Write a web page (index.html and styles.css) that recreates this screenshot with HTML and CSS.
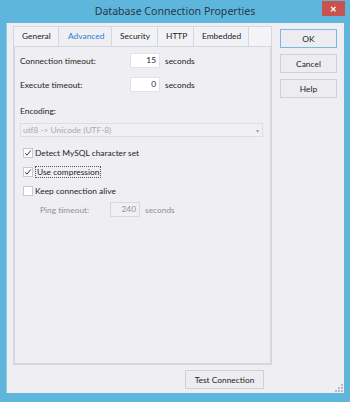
FILE: index.html
```html
<!DOCTYPE html>
<html lang="en">
<head>
  <meta charset="UTF-8" />
  <title>Database Connection Properties</title>
  <link rel="stylesheet" href="styles.css">
</head>
<body>
  <div class="window">
    <div class="titlebar">
      <span class="title">Database Connection Properties</span>
      <div class="close">&#x2715;</div>
    </div>

    <div class="client">
      <div class="main">
        <div class="tabs">
          <div class="tab">General</div>
          <div class="tab active">Advanced</div>
          <div class="tab">Security</div>
          <div class="tab">HTTP</div>
          <div class="tab">Embedded</div>
          <div class="tab filler"></div>
        </div>

        <div class="panel">
          <div class="row first">
            <span class="label">Connection timeout:</span>
            <span class="num">15</span>
            <span class="unit">seconds</span>
          </div>
          <div class="row">
            <span class="label">Execute timeout:</span>
            <span class="num">0</span>
            <span class="unit">seconds</span>
          </div>

          <div class="enc-label">Encoding:</div>
          <div class="combo">
            <span>utf8 -&gt; Unicode (UTF-8)</span>
            <span class="arrow">&#9662;</span>
          </div>

          <div class="check first-check">
            <span class="box checked">
              <svg width="8" height="8" viewBox="0 0 8 8"><path d="M1.2 4.4 L3 6.2 L6.8 1.4" fill="none" stroke="#333" stroke-width="1"/></svg>
            </span>
            <span>Detect MySQL character set</span>
          </div>
          <div class="check">
            <span class="box checked">
              <svg width="8" height="8" viewBox="0 0 8 8"><path d="M1.2 4.4 L3 6.2 L6.8 1.4" fill="none" stroke="#333" stroke-width="1"/></svg>
            </span>
            <span class="focus">Use compression</span>
          </div>
          <div class="check">
            <span class="box"></span>
            <span>Keep connection alive</span>
          </div>

          <div class="row ping">
            <span class="label">Ping timeout:</span>
            <span class="num disabled">240</span>
            <span class="unit">seconds</span>
          </div>
        </div>

        <div class="footer">
          <button class="btn test">Test Connection</button>
        </div>
      </div>

      <div class="side">
        <button class="btn default">OK</button>
        <button class="btn">Cancel</button>
        <button class="btn">Help</button>
      </div>

      <svg class="grip" width="8" height="8" viewBox="0 0 8 8">
        <rect x="6" y="0" width="2" height="2" fill="#b8b8c0"/>
        <rect x="3" y="3" width="2" height="2" fill="#b8b8c0"/>
        <rect x="6" y="3" width="2" height="2" fill="#b8b8c0"/>
        <rect x="0" y="6" width="2" height="2" fill="#b8b8c0"/>
        <rect x="3" y="6" width="2" height="2" fill="#b8b8c0"/>
        <rect x="6" y="6" width="2" height="2" fill="#b8b8c0"/>
      </svg>
    </div>
  </div>
</body>
</html>
```

FILE: styles.css
```css
body {
  margin: 0;
  font-family: Lato, "Noto Sans", sans-serif;
  font-size: 8.4px;
  color: #1e1e1e;
}

.window {
  width: 350px;
  height: 402px;
  box-sizing: border-box;
  background: #5fb6dc;
  padding: 0 6px 9px 6px;
  display: flex;
  flex-direction: column;
}

.titlebar {
  height: 23px;
  position: relative;
  display: flex;
  justify-content: center;
  align-items: center;
}

.title {
  font-family: "Noto Sans", sans-serif;
  font-size: 10.6px;
  color: #24384a;
  margin-top: -2px;
}

.close {
  position: absolute;
  right: -1px;
  top: 1px;
  width: 23px;
  height: 15px;
  background: #c9524f;
  color: #fff;
  font-size: 8px;
  font-weight: bold;
  display: flex;
  align-items: center;
  justify-content: center;
}

.client {
  flex: 1;
  position: relative;
  background: #eeeef3;
  border-left: 1px solid #8fcbe6;
  padding: 3px 0 0 6px;
  display: flex;
  gap: 8px;
}

.main {
  width: 259px;
  display: flex;
  flex-direction: column;
}

.tabs {
  display: flex;
  height: 20px;
}

.tab {
  box-sizing: border-box;
  border: 1px solid #d6d6de;
  border-right: none;
  border-bottom: none;
  background: #f2f2f6;
  padding: 0 8px;
  height: 20px;
  line-height: 19px;
  color: #222;
}

.tab:nth-child(1) { width: 45px; }
.tab:nth-child(2) { width: 53px; }
.tab:nth-child(3) { width: 46px; }
.tab:nth-child(4) { width: 36px; }
.tab:nth-child(5) { width: 55px; }

.tab.active {
  background: #eeeef3;
  color: #2a7fd4;
  padding-left: 9px;
}

.tab.filler {
  flex: 1;
  border-right: 1px solid #d6d6de;
  background: #f4f4f8;
}

.panel {
  box-sizing: border-box;
  height: 319px;
  border: 1px solid #d6d6de;
  border-left-width: 2px;
  border-right-width: 2px;
  border-bottom-width: 2px;
  padding: 0 0 0 5px;
  display: flex;
  flex-direction: column;
}

.row {
  display: flex;
  align-items: center;
  height: 15px;
  margin-top: 9px;
}

.row.first {
  margin-top: 6px;
}

.label {
  width: 110px;
}

.num {
  box-sizing: border-box;
  width: 30px;
  height: 15px;
  background: #fff;
  border: 1px solid #e2e2e8;
  text-align: right;
  padding-right: 3px;
  line-height: 13px;
}

.unit {
  margin-left: 5px;
}

.enc-label {
  margin-top: 14px;
  height: 12px;
}

.combo {
  box-sizing: border-box;
  margin-top: 5px;
  width: 243px;
  height: 14px;
  border: 1px solid #dcdce2;
  background: #f0f0f4;
  color: #a8a8b0;
  display: flex;
  justify-content: space-between;
  align-items: center;
  padding: 0 3px 0 2px;
}

.arrow {
  font-size: 6px;
  color: #a0a0a8;
}

.check {
  display: flex;
  align-items: center;
  height: 12px;
  margin-top: 7px;
}

.check.first-check {
  margin-top: 10px;
}

.box {
  box-sizing: border-box;
  width: 10px;
  height: 10px;
  margin-left: 3px;
  margin-right: 2px;
  background: #fff;
  border: 1px solid #c8c8d0;
  display: flex;
  align-items: center;
  justify-content: center;
}

.focus {
  border: 1px dotted #555;
  padding: 0 1px;
  line-height: 10px;
}

.row.ping {
  margin-top: 5px;
  color: #909098;
}

.row.ping .label {
  padding-left: 20px;
  box-sizing: border-box;
  width: 90px;
}

.num.disabled {
  background: #f0f0f4;
  border-color: #d8d8de;
  color: #909098;
}

.footer {
  display: flex;
  justify-content: flex-end;
  padding-right: 8px;
  margin-top: 5px;
}

.btn {
  box-sizing: border-box;
  font-family: inherit;
  font-size: 8.4px;
  color: #1e1e1e;
  background: #ececf1;
  border: 1px solid #d0d0d8;
  padding: 0;
  height: 19px;
  width: 57px;
}

.btn.test {
  width: 79px;
}

.btn.default {
  border-color: #7db8e0;
}

.side {
  display: flex;
  flex-direction: column;
  gap: 6px;
  margin-top: 3px;
}

.grip {
  position: absolute;
  right: 1px;
  bottom: 1px;
}
```
